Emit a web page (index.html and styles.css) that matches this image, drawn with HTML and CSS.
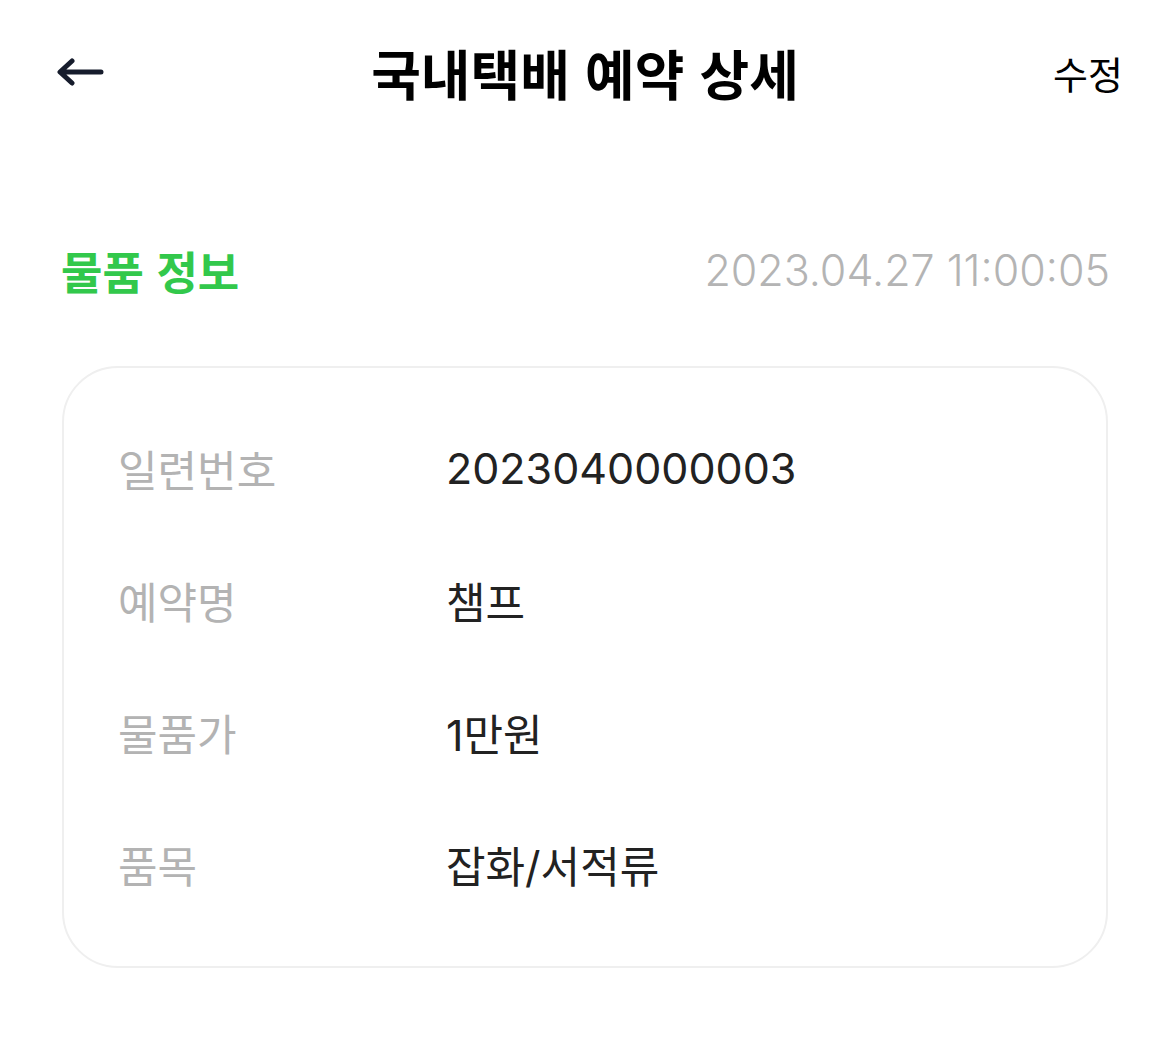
FILE: index.html
```html
<!DOCTYPE html>
<html lang="ko">
<head>
  <meta charset="UTF-8" />
  <meta name="viewport" content="width=device-width, initial-scale=1.0"/>
  <title>국내택배 예약 상세</title>
  <link rel="stylesheet" href="styles.css">
</head>
<body>
  <header class="topbar">
    <button class="back-btn" aria-label="뒤로">
      <svg viewBox="0 0 48 28" width="48" height="28">
        <path d="M45 14H5M16 3L4 14l12 11" fill="none" stroke="#161c2c" stroke-width="5" stroke-linecap="round" stroke-linejoin="round"/>
      </svg>
    </button>
    <h1 class="title">국내택배 예약 상세</h1>
    <a class="edit-link">수정</a>
  </header>

  <section class="section-head">
    <h2 class="section-title">물품 정보</h2>
    <span class="section-date">2023.04.27 11:00:05</span>
  </section>

  <div class="card">
    <div class="row">
      <span class="label">일련번호</span>
      <span class="value">2023040000003</span>
    </div>
    <div class="row">
      <span class="label">예약명</span>
      <span class="value">챔프</span>
    </div>
    <div class="row">
      <span class="label">물품가</span>
      <span class="value">1만원</span>
    </div>
    <div class="row">
      <span class="label">품목</span>
      <span class="value">잡화/서적류</span>
    </div>
  </div>
</body>
</html>
```

FILE: styles.css
```css
body {
  margin: 0;
  background: #fff;
  color: #222;
  font-family: "Noto Sans CJK KR", "Noto Sans", sans-serif;
}

/* Top bar */
.topbar {
  height: 144px;
  display: flex;
  align-items: center;
  justify-content: space-between;
  padding: 0 47px 0 56px;
}

.back-btn {
  flex: 0 0 90px;
  background: none;
  border: none;
  padding: 0;
  height: 28px;
  display: flex;
  cursor: pointer;
}

.title {
  margin: 0;
  font-size: 54px;
  font-weight: 700;
  color: #000;
}

.edit-link {
  flex: 0 0 99px;
  text-align: right;
  font-size: 38px;
  color: #000;
  cursor: pointer;
}

/* Section header */
.section-head {
  height: 60px;
  margin-top: 96px;
  display: flex;
  align-items: center;
  justify-content: space-between;
  padding: 0 60px 0 61px;
}

.section-title {
  margin: 0;
  font-size: 45px;
  font-weight: 700;
  color: #32c84b;
}

.section-date {
  font-family: Inter, "Noto Sans CJK KR", sans-serif;
  font-size: 43px;
  font-weight: 300;
  color: #b4b4b4;
}

/* Info card */
.card {
  margin: 66px 62px 0;
  border: 2px solid #efefef;
  border-radius: 56px;
  padding: 34px 54px 36px;
}

.row {
  height: 132px;
  display: flex;
  align-items: center;
}

.label {
  flex: 0 0 328px;
  font-size: 43px;
  color: #b3b3b3;
}

.value {
  font-family: Inter, "Noto Sans CJK KR", sans-serif;
  font-size: 43px;
  color: #222;
}
```
